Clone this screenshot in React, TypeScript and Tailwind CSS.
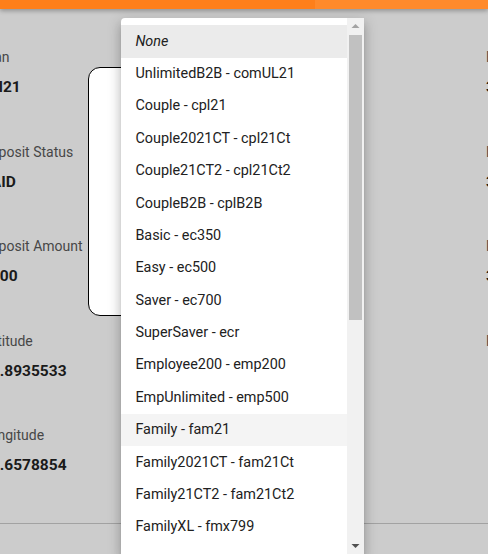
import React from 'react';

const leftFields = [
  { label: 'Plan', value: 'cpl21' },
  { label: 'Deposit Status', value: 'PAID' },
  { label: 'Deposit Amount', value: '$100' },
  { label: 'Latitude', value: '42.8935533' },
  { label: 'Longitude', value: '73.6578854' },
];

const rightFields = [
  { label: 'Billing Date', value: '3/01/2021' },
  { label: 'Device', value: '3.2.1' },
  { label: 'Plan Price', value: '35.00' },
  { label: 'Port Status', value: '' },
];

const options = [
  'UnlimitedB2B - comUL21',
  'Couple - cpl21',
  'Couple2021CT - cpl21Ct',
  'Couple21CT2 - cpl21Ct2',
  'CoupleB2B - cplB2B',
  'Basic - ec350',
  'Easy - ec500',
  'Saver - ec700',
  'SuperSaver - ecr',
  'Employee200 - emp200',
  'EmpUnlimited - emp500',
  'Family - fam21',
  'Family2021CT - fam21Ct',
  'Family21CT2 - fam21Ct2',
  'FamilyXL - fmx799',
];

const Field = ({ label, value }: { label: string; value: string }) => (
  <div className="h-[94.5px] whitespace-nowrap">
    <div className="h-[20px] text-[14px] leading-[20px] text-[#474747]">{label}</div>
    <div className="mt-[9px] h-[22px] text-[15.5px] font-bold leading-[22px] text-[#1a1a1a]">{value}</div>
  </div>
);

export default function App() {
  return (
    <div
      className="relative h-[554px] w-[488px] overflow-hidden bg-[#cccccc]"
      style={{ fontFamily: 'Roboto, "Liberation Sans", sans-serif' }}
    >
      <div className="relative z-10 h-[9px] bg-[linear-gradient(to_right,#fe7f1a_64.5%,#ff8a2b_64.5%)] shadow-[0_2px_4px_rgba(0,0,0,0.28)]" />

      <div className="flex h-[514px]">
        <div className="-ml-[18px] w-[106px] shrink-0 pt-[38px]">
          {leftFields.map((f) => (
            <Field key={f.label} {...f} />
          ))}
        </div>
        <div className="mt-[58px] h-[249px] w-[80px] shrink-0 rounded-[12px] border border-black bg-white" />
        <div className="ml-auto w-[2px] shrink-0 pt-[38px]">
          {rightFields.map((f) => (
            <Field key={f.label} {...f} />
          ))}
        </div>
      </div>
      <div className="h-[31px] border-t border-[#a2a2a2]" />

      {/* select popup */}
      <div className="absolute bottom-0 left-[121px] top-[18px] flex w-[243px] overflow-hidden rounded-tl-[4px] bg-white shadow-[0_5px_5px_-3px_rgba(0,0,0,0.2),0_8px_10px_1px_rgba(0,0,0,0.14),0_3px_14px_2px_rgba(0,0,0,0.12)]">
        <ul className="w-[226px] shrink-0 pt-[7.2px] text-[14.4px] text-[#212121]">
          <li className="flex h-[32.4px] items-center bg-[#ebebeb] pl-[14.4px] italic">None</li>
          {options.map((o) => (
            <li
              key={o}
              className={
                'flex h-[32.4px] items-center whitespace-nowrap pl-[14.4px] ' +
                (o === 'Family - fam21' ? 'bg-[#f4f4f4]' : '')
              }
            >
              {o}
            </li>
          ))}
        </ul>
        <div className="relative flex-1 bg-[#f1f1f1]">
          <svg className="absolute left-[4px] top-[5px]" width="9" height="6" viewBox="0 0 9 6">
            <path d="M0.5 5 L4.5 1 L8.5 5 Z" fill="#a3a3a3" />
          </svg>
          <div className="absolute left-[2px] right-[2px] top-[17px] h-[285px] bg-[#c1c1c1]" />
          <svg className="absolute bottom-[5px] left-[4px]" width="9" height="6" viewBox="0 0 9 6">
            <path d="M0.5 1 L4.5 5 L8.5 1 Z" fill="#505050" />
          </svg>
        </div>
      </div>
    </div>
  );
}
